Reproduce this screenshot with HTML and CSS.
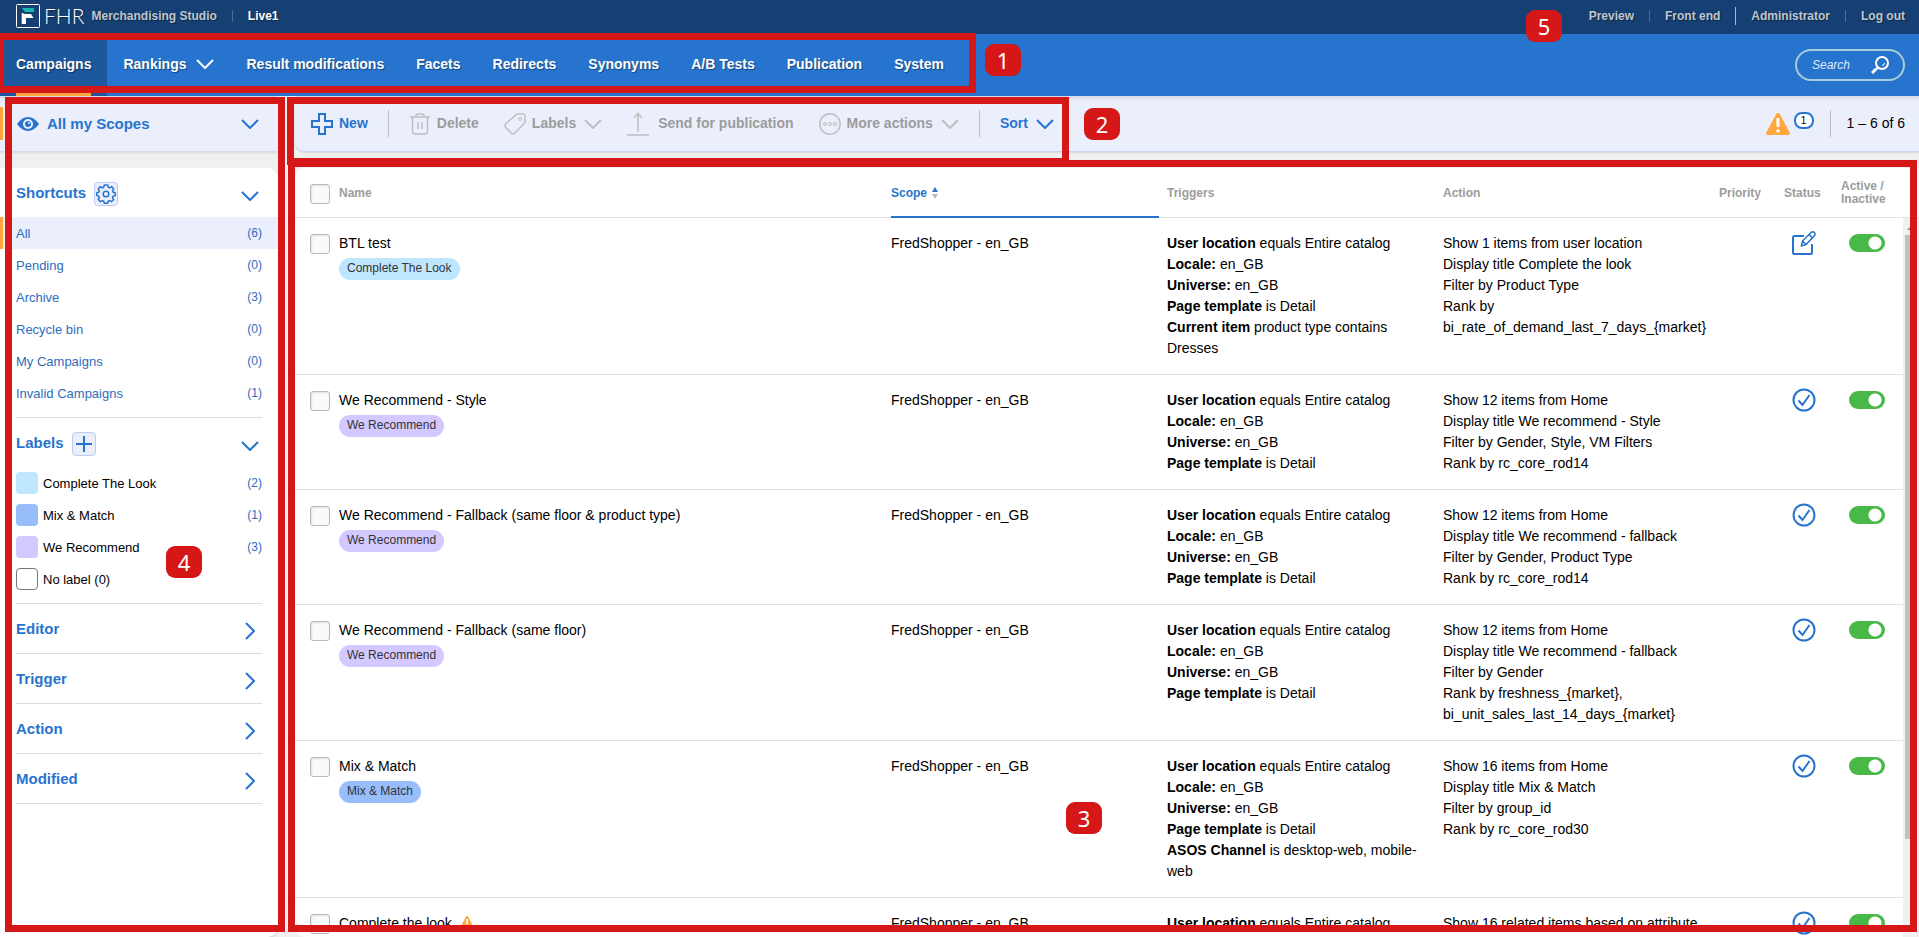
FILE: index.html
```html
<!DOCTYPE html>
<html lang="en">
<head>
<meta charset="utf-8">
<meta name="viewport" content="width=device-width, initial-scale=1">
<title>FHR Merchandising Studio – Campaigns</title>
<link rel="stylesheet" href="styles.css">
</head>
<body>
<svg class="sprite" aria-hidden="true">
  <symbol id="down" viewBox="0 0 18 10"><path d="M1 1l8 8 8-8"/></symbol>
  <symbol id="right" viewBox="0 0 10 18"><path d="M1 1l8 8-8 8"/></symbol>
  <symbol id="warn" viewBox="0 0 24 22"><path d="M12 0c.8 0 1.4.4 1.8 1.1l10 18.6c.6 1.2-.2 2.3-1.4 2.3H1.600C.4 22-.4 20.900.2 19.700l10-18.600C10.600.4 11.200 0 12 0z" fill="#ffa63d"/><path d="M12 5v9" stroke="#fff" stroke-width="3"/><circle cx="12" cy="18" r="1.800" fill="#fff"/></symbol>
  <symbol id="done" viewBox="0 0 24 24"><circle cx="12" cy="12" r="10.500"/><path d="M6.500 12.500l4 4.500 7-10"/></symbol>
  <symbol id="edit" viewBox="0 0 24 24"><path d="M12 5H2.500Q1 5 1 6.500v15Q1 23 2.500 23h16q1.500 0 1.500-1.500V13"/><path d="M9.500 15l1-5 8.700-8.700q1.800-1.100 3.200.3 1.200 1.300.2 3L14 13.500z M17 3.500l3.500 3.500M10.500 10l3.500 3.500" stroke-width="1.500"/></symbol>
</svg>

<header class="topbar">
  <svg class="logo" viewBox="0 0 24 24" aria-hidden="true"><rect x=".5" y=".5" width="23" height="23" rx="1" fill="none" stroke="#fff"/><path d="M5.700 4H18v4H9z" fill="#14b8ae"/><path d="M5.700 8.700L9 10h6l2.500 4H10v6H5.700z" fill="#fff"/></svg>
  <span class="brand">FHR</span>
  <span class="product">Merchandising Studio</span>
  <i class="bar"></i>
  <span class="live">Live1</span>
  <div class="account">
    <a href="#">Preview</a><i class="bar"></i><a href="#">Front end</a><i class="bar bar-hot"></i><a href="#">Administrator</a><i class="bar"></i><a href="#">Log out</a>
  </div>
</header>

<nav class="nav">
  <a class="current" href="#">Campaigns</a>
  <a href="#">Rankings <svg class="chev"><use href="#down"/></svg></a>
  <a href="#">Result modifications</a>
  <a href="#">Facets</a>
  <a href="#">Redirects</a>
  <a href="#">Synonyms</a>
  <a href="#">A/B Tests</a>
  <a href="#">Publication</a>
  <a href="#">System</a>
  <form class="search">
    <input type="text" placeholder="Search" aria-label="Search">
    <svg viewBox="0 0 18 18" aria-hidden="true"><circle cx="11" cy="7" r="6" fill="none" stroke="#fff" stroke-width="2"/><path d="M7 11.500l-2 2" stroke="#fff" stroke-width="2"/><path d="M5 13l-4 4" stroke="#fff" stroke-width="3"/><path d="M11 9.500q2.500-.2 2.700-2.500" fill="none" stroke="#fff"/></svg>
  </form>
</nav>

<main class="layout">
  <button class="scopes">
    <svg class="eye" viewBox="0 0 22 14" aria-hidden="true"><path d="M0 7Q5 0 11 0t11 7q-5 7-11 7T0 7z" fill="#2774cf"/><circle cx="11" cy="7" r="5" fill="#ebeffc"/><circle cx="11" cy="7" r="3" fill="#2774cf"/><circle cx="12" cy="6" r="1" fill="#ebeffc"/></svg>
    <span>All my Scopes</span>
    <svg class="chev"><use href="#down"/></svg>
  </button>

  <div class="toolbar">
    <button class="tool">
      <svg class="icon" viewBox="0 0 22 22"><path d="M8 1h6v7h7v6h-7v7H8v-7H1V8h7z" stroke-width="2"/></svg>New
    </button>
    <i class="rule"></i>
    <div class="tools">
      <button class="tool" disabled>
        <svg class="icon" viewBox="0 0 22 22"><path d="M1 4h20M3.500 4v14.500q0 2.500 2.500 2.500h10q2.500 0 2.500-2.500V4M6.500 4Q7 1 9 1h4q2 0 2.500 3M9 9v7M13 9v7" stroke-width="1.500"/></svg>Delete
      </button>
      <button class="tool" disabled>
        <svg class="icon" viewBox="0 0 22 22"><path d="M13 1h6q2 0 2 2v6.500L10.500 20.500q-1.500 1-3 0L1.500 14q-1-1.500 0-3z" stroke-width="1.500"/><circle cx="16" cy="6" r="1.500"/></svg>Labels
        <svg class="chev"><use href="#down"/></svg>
      </button>
      <button class="tool" disabled>
        <svg class="icon icon-send" viewBox="0 0 22 24"><path d="M11 20V2M7 6l4-4.500L15 6M0 23h22" stroke-width="1.500"/></svg>Send for publication
      </button>
      <button class="tool" disabled>
        <svg class="icon" viewBox="0 0 22 22"><circle cx="11" cy="11" r="10.200" stroke-width="1.500"/><circle cx="6" cy="11" r="1.500"/><circle cx="11" cy="11" r="1.500"/><circle cx="16" cy="11" r="1.500"/></svg>More actions
        <svg class="chev"><use href="#down"/></svg>
      </button>
    </div>
    <i class="rule"></i>
    <button class="tool">Sort <svg class="chev"><use href="#down"/></svg></button>
    <div class="summary">
      <svg class="warn"><use href="#warn"/></svg>
      <span class="bubble">1</span>
      <i class="rule"></i>
      <span>1 – 6 of 6</span>
    </div>
  </div>

  <aside class="side">
    <section>
      <div class="side-head">
        <h2>Shortcuts</h2>
        <button class="mini" aria-label="Shortcut settings"><svg viewBox="0 0 18 18"><path d="M7.300 0h3.400l.5 2.200 1.300.6 2-1.200 2.200 2.300-1.200 1.900.6 1.400 2.100.5v2.900l-2.200.6-.5 1.300 1.100 2-2.200 2.200-2-1.100-1.300.6-.5 2H7.300l-.6-2-1.300-.6-2 1.100-2.200-2.200 1.200-2-.6-1.300L-.2 10.600V7.700l2-.5.6-1.400-1.200-1.900 2.200-2.300 2 1.200 1.300-.6z" stroke-linejoin="round" stroke-width="1.500"/><circle cx="9" cy="9" r="2.800" stroke-width="1.500"/></svg></button>
        <svg class="chev"><use href="#down"/></svg>
      </div>
      <ul class="list">
        <li class="on"><a href="#">All</a><span>(6)</span></li>
        <li><a href="#">Pending</a><span>(0)</span></li>
        <li><a href="#">Archive</a><span>(3)</span></li>
        <li><a href="#">Recycle bin</a><span>(0)</span></li>
        <li><a href="#">My Campaigns</a><span>(0)</span></li>
        <li><a href="#">Invalid Campaigns</a><span>(1)</span></li>
      </ul>
    </section>
    <section>
      <div class="side-head">
        <h2>Labels</h2>
        <button class="mini" aria-label="Add label"><svg viewBox="0 0 18 18"><path d="M9 1v16M1 9h16" stroke-width="2"/></svg></button>
        <svg class="chev"><use href="#down"/></svg>
      </div>
      <ul class="list labels">
        <li><i class="swatch look"></i><a href="#">Complete The Look</a><span>(2)</span></li>
        <li><i class="swatch mix"></i><a href="#">Mix &amp; Match</a><span>(1)</span></li>
        <li><i class="swatch rec"></i><a href="#">We Recommend</a><span>(3)</span></li>
        <li><i class="swatch none"></i><a href="#">No label (0)</a></li>
      </ul>
    </section>
    <section><div class="side-head"><h2>Editor</h2><svg class="next"><use href="#right"/></svg></div></section>
    <section><div class="side-head"><h2>Trigger</h2><svg class="next"><use href="#right"/></svg></div></section>
    <section><div class="side-head"><h2>Action</h2><svg class="next"><use href="#right"/></svg></div></section>
    <section><div class="side-head"><h2>Modified</h2><svg class="next"><use href="#right"/></svg></div></section>
  </aside>

  <div class="panel">
    <table class="grid">
      <colgroup><col class="c-check"><col><col class="c-wide"><col class="c-wide"><col class="c-wide"><col class="c-prio"><col class="c-status"><col class="c-active"></colgroup>
      <thead>
        <tr>
          <th><input class="tick" type="checkbox" aria-label="Select all"></th>
          <th>Name</th>
          <th class="sorted"><div>Scope <svg class="sort" viewBox="0 0 6 12"><path d="M3 0l3 5H0z" fill="#2774cf"/><path d="M3 12l3-5H0z" fill="#bbb"/></svg></div></th>
          <th>Triggers</th><th>Action</th><th>Priority</th><th>Status</th><th>Active /<br>Inactive</th>
        </tr>
      </thead>
      <tbody>
        <tr>
          <td><input class="tick" type="checkbox" aria-label="Select BTL test"></td>
          <td>BTL test<br><span class="pill look">Complete The Look</span></td>
          <td>FredShopper - en_GB</td>
          <td><b>User location</b> equals Entire catalog<br><b>Locale:</b> en_GB<br><b>Universe:</b> en_GB<br><b>Page template</b> is Detail<br><b>Current item</b> product type contains Dresses</td>
          <td>Show 1 items from user location<br>Display title Complete the look<br>Filter by Product Type<br>Rank by bi_rate_of_demand_last_7_days_{market}</td>
          <td></td>
          <td class="status"><svg><use href="#edit"/></svg></td>
          <td class="active"><input class="toggle" type="checkbox" role="switch" checked aria-label="BTL test active"></td>
        </tr>
        <tr>
          <td><input class="tick" type="checkbox" aria-label="Select We Recommend - Style"></td>
          <td>We Recommend - Style<br><span class="pill rec">We Recommend</span></td>
          <td>FredShopper - en_GB</td>
          <td><b>User location</b> equals Entire catalog<br><b>Locale:</b> en_GB<br><b>Universe:</b> en_GB<br><b>Page template</b> is Detail</td>
          <td>Show 12 items from Home<br>Display title We recommend - Style<br>Filter by Gender, Style, VM Filters<br>Rank by rc_core_rod14</td>
          <td></td>
          <td class="status"><svg><use href="#done"/></svg></td>
          <td class="active"><input class="toggle" type="checkbox" role="switch" checked aria-label="We Recommend - Style active"></td>
        </tr>
        <tr>
          <td><input class="tick" type="checkbox" aria-label="Select We Recommend - Fallback (same floor &amp; product type)"></td>
          <td>We Recommend - Fallback (same floor &amp; product type)<br><span class="pill rec">We Recommend</span></td>
          <td>FredShopper - en_GB</td>
          <td><b>User location</b> equals Entire catalog<br><b>Locale:</b> en_GB<br><b>Universe:</b> en_GB<br><b>Page template</b> is Detail</td>
          <td>Show 12 items from Home<br>Display title We recommend - fallback<br>Filter by Gender, Product Type<br>Rank by rc_core_rod14</td>
          <td></td>
          <td class="status"><svg><use href="#done"/></svg></td>
          <td class="active"><input class="toggle" type="checkbox" role="switch" checked aria-label="Fallback by floor and product type active"></td>
        </tr>
        <tr>
          <td><input class="tick" type="checkbox" aria-label="Select We Recommend - Fallback (same floor)"></td>
          <td>We Recommend - Fallback (same floor)<br><span class="pill rec">We Recommend</span></td>
          <td>FredShopper - en_GB</td>
          <td><b>User location</b> equals Entire catalog<br><b>Locale:</b> en_GB<br><b>Universe:</b> en_GB<br><b>Page template</b> is Detail</td>
          <td>Show 12 items from Home<br>Display title We recommend - fallback<br>Filter by Gender<br>Rank by freshness_{market}, bi_unit_sales_last_14_days_{market}</td>
          <td></td>
          <td class="status"><svg><use href="#done"/></svg></td>
          <td class="active"><input class="toggle" type="checkbox" role="switch" checked aria-label="Fallback by floor active"></td>
        </tr>
        <tr>
          <td><input class="tick" type="checkbox" aria-label="Select Mix &amp; Match"></td>
          <td>Mix &amp; Match<br><span class="pill mix">Mix &amp; Match</span></td>
          <td>FredShopper - en_GB</td>
          <td><b>User location</b> equals Entire catalog<br><b>Locale:</b> en_GB<br><b>Universe:</b> en_GB<br><b>Page template</b> is Detail<br><b>ASOS Channel</b> is desktop-web, mobile-web</td>
          <td>Show 16 items from Home<br>Display title Mix &amp; Match<br>Filter by group_id<br>Rank by rc_core_rod30</td>
          <td></td>
          <td class="status"><svg><use href="#done"/></svg></td>
          <td class="active"><input class="toggle" type="checkbox" role="switch" checked aria-label="Mix &amp; Match active"></td>
        </tr>
        <tr>
          <td><input class="tick" type="checkbox" aria-label="Select Complete the look"></td>
          <td>Complete the look <svg class="warn-small"><use href="#warn"/></svg></td>
          <td>FredShopper - en_GB</td>
          <td><b>User location</b> equals Entire catalog</td>
          <td>Show 16 related items based on attribute</td>
          <td></td>
          <td class="status"><svg><use href="#done"/></svg></td>
          <td class="active"><input class="toggle" type="checkbox" role="switch" checked aria-label="Complete the look active"></td>
        </tr>
      </tbody>
    </table>
    <div class="gutter">
      <div class="gutter-head"></div>
      <div class="track"><i class="arrow"></i><i class="thumb"></i></div>
    </div>
  </div>
</main>

<div class="frame frame-nav"></div>
<div class="frame frame-tools"></div>
<div class="frame frame-table"></div>
<div class="frame frame-side"></div>
<span class="mark mark-1">1</span>
<span class="mark mark-2">2</span>
<span class="mark mark-3">3</span>
<span class="mark mark-4">4</span>
<span class="mark mark-5">5</span>
</body>
</html>
```

FILE: styles.css
```css
* { box-sizing: border-box; }

body {
  position: relative;
  display: flex;
  flex-direction: column;
  height: 100vh;
  margin: 0;
  overflow: hidden;
  background: #f0f0f0;
  color: #000;
  font: 14px/21px "Liberation Sans", Arial, sans-serif;
}

a { color: inherit; text-decoration: none; }
button { padding: 0; border: 0; background: none; font: inherit; color: inherit; }
svg { flex: none; fill: none; stroke: none; }
.sprite { position: absolute; width: 0; height: 0; }

.chev { width: 18px; height: 10px; stroke: currentColor; stroke-width: 2; }
.next { width: 10px; height: 18px; margin: 5px 7px 0 auto; stroke: #2774cf; stroke-width: 2; }

/* Top bar */
.topbar {
  display: flex;
  align-items: center;
  height: 34px;
  padding: 0 14px 2px 16px;
  background: #164073;
  color: #bfc6cf;
  font-size: 12px;
  font-weight: bold;
}
.topbar, .nav { flex: none; text-shadow: 1px 1px 1px rgba(0, 0, 0, .4); }
.logo { width: 24px; height: 24px; }
.brand { margin: 0 7px 0 4px; color: #fff; font: 300 21px/24px Lato, sans-serif; }
.bar { width: 1px; height: 12px; margin: 0 15px; background: #4d6c8c; }
.bar-hot { height: 18px; background: #ffa63d; }
.live { color: #fff; }
.account { display: flex; align-items: center; margin-left: auto; }

/* Main navigation */
.nav {
  display: flex;
  align-items: stretch;
  height: 62px;
  padding-right: 14px;
  background: #2774cf;
  color: #fff;
  font-weight: bold;
}
.nav a { display: flex; align-items: center; gap: 10px; padding: 0 16px 2px; }
.nav .current { background: linear-gradient(#ffa63d, #ffa63d) center bottom / calc(100% - 32px) 3px no-repeat #1d589f; }
.search {
  display: flex;
  align-items: center;
  align-self: center;
  width: 110px;
  height: 32px;
  margin-left: auto;
  padding: 0 14px 0 15px;
  border: 2px solid #a8cdda;
  border-radius: 16px;
}
.search input {
  flex: 1;
  min-width: 0;
  padding: 0;
  border: 0;
  outline: 0;
  background: none;
  color: #fff;
  font: italic 12px/20px "Liberation Sans", Arial, sans-serif;
}
.search input::placeholder { color: #dfeaf8; }
.search svg { width: 18px; height: 18px; }

/* Page grid */
.layout {
  flex: 1;
  min-height: 0;
  display: grid;
  grid-template-columns: 278px minmax(0, 1fr);
  grid-template-rows: 56px minmax(0, 1fr);
  gap: 16px 17px;
}
.scopes, .toolbar {
  display: flex;
  align-items: center;
  border-bottom: 1px solid #c6d5ec;
  background: linear-gradient(#d5dae8, #ebeffc 5px);
  box-shadow: 0 1px 2px rgba(0, 0, 0, .1);
  font-weight: bold;
}
.scopes {
  gap: 8px;
  padding: 0 19px 0 14px;
  border-left: 3px solid #ffa63d;
  border-image: linear-gradient(transparent 12px, #ffa63d 12px, #ffa63d 44px, transparent 44px) 1;
  color: #2774cf;
  font-size: 15px;
}
.scopes .chev { margin-left: auto; }
.eye { width: 22px; height: 14px; }
.toolbar { gap: 20px; padding: 0 14px 0 16px; border-radius: 0 0 0 10px; }
.tools { display: flex; gap: 25px; }
.tool { display: flex; align-items: center; gap: 6px; color: #2774cf; white-space: nowrap; }
.tool:disabled { color: #9c9c9c; }
.tool svg { stroke: currentColor; }
.tool:disabled svg { stroke: #bfbfbf; }
.tool .chev { margin-left: 2px; }
.icon { width: 22px; height: 22px; }
.icon-send { height: 24px; margin-right: 3px; }
.rule { width: 1px; height: 27px; background: #bcbfc9; }
.summary { display: flex; align-items: center; gap: 16px; margin-left: auto; font-weight: normal; }
.warn { width: 24px; height: 22px; }
.bubble {
  width: 20px;
  height: 17px;
  margin: 0 0 6px -12px;
  border: 2px solid #2774cf;
  border-radius: 8px;
  background: #fff;
  font-size: 10px;
  line-height: 13px;
  text-align: center;
}

/* Sidebar */
.side { border-radius: 0 10px 10px 0; background: #fff; box-shadow: 0 1px 2px rgba(0, 0, 0, .15); }
.side section::after { content: ""; display: block; height: 1px; margin: 0 16px; background: #dadada; }
.side-head { display: flex; align-items: center; height: 49px; padding: 0 16px; }
.side-head h2 { margin: 0; color: #2774cf; font-size: 15px; line-height: 21px; }
.side-head .chev { margin: 7px 3px 0 auto; color: #2774cf; }
.mini {
  display: grid;
  place-items: center;
  width: 24px;
  height: 24px;
  margin: 3px 0 0 8px;
  border: 1px solid #bccbf1;
  border-radius: 4px;
  background: #ebeffc;
}
.mini svg { width: 18px; height: 18px; stroke: #2774cf; overflow: visible; }
.list { margin: 0; padding: 0 0 8px; list-style: none; color: #2e6cbb; font-size: 13px; }
.list li { display: flex; align-items: center; height: 32px; padding: 0 16px 0 13px; border-left: 3px solid transparent; }
.list .on { border-color: #ffa63d; background: #ebeffc; }
.list span { margin-left: auto; font-size: 12px; }
.labels a { color: #000; }
.swatch { width: 22px; height: 22px; margin-right: 5px; border-radius: 4px; }
.look { background: #bfe6ff; }
.mix { background: #97bdfb; }
.rec { background: #d3c8ff; }
.none { border: 1px solid #777; background: #fff; }

/* Campaign table */
.panel { display: flex; overflow: hidden; border-radius: 10px 0 0 10px; background: #fff; }
.grid { flex: 1; align-self: flex-start; min-width: 0; border-collapse: separate; border-spacing: 0; table-layout: fixed; }
.c-check { width: 44px; }
.c-wide { width: 276px; }
.c-prio { width: 65px; }
.c-status { width: 57px; }
.c-active { width: 62px; }
.grid th { height: 50px; padding: 1px 0 0; border-bottom: 1px solid #e2e3e8; color: #9c9c9c; font-size: 12px; line-height: 13px; text-align: left; }
.grid td { padding: 15px 8px 15px 0; border-bottom: 1px solid #e0e2e8; vertical-align: top; }
.grid th.sorted {
  border-bottom-color: transparent;
  background:
    linear-gradient(#2774cf, #2774cf) left bottom / calc(100% - 8px) 2px no-repeat border-box,
    linear-gradient(#e2e3e8, #e2e3e8) left bottom / 100% 1px no-repeat border-box;
  color: #2774cf;
}
.sorted div { display: flex; align-items: center; gap: 5px; }
.sort { width: 6px; height: 12px; }
.tick {
  appearance: none;
  display: block;
  width: 20px;
  height: 20px;
  margin: 1px 0 0 15px;
  border: 1px solid #b9b9b9;
  border-radius: 3px;
  background: #fafafa;
  box-shadow: inset 1px 1px 2px rgba(0, 0, 0, .1);
}
.pill {
  display: inline-block;
  height: 22px;
  margin-top: 4px;
  padding: 0 8px;
  border-radius: 11px;
  color: #333;
  font-size: 12px;
  line-height: 20px;
  vertical-align: top;
}
.warn-small { width: 14px; height: 13px; margin-left: 4px; vertical-align: -1px; }
.grid td.status { padding: 13px 0 0 8px; }
.status svg { display: block; width: 24px; height: 24px; stroke: #2774cf; stroke-width: 2; }
.grid td.active { padding: 16px 0 0 8px; }
.toggle {
  appearance: none;
  display: block;
  width: 36px;
  height: 18px;
  margin: 0;
  border-radius: 9px;
  background: radial-gradient(circle at 26px 9px, #fff 6px, transparent 7px), #48b847;
}
.gutter { display: flex; flex-direction: column; width: 16px; }
.gutter-head { flex: none; height: 50px; border-bottom: 1px solid #e2e3e8; }
.track { flex: 1; display: flex; flex-direction: column; align-items: center; gap: 5px; padding-top: 8px; background: #f1f1f1; }
.arrow { border: 4px solid transparent; border-top: 0; border-bottom-color: #8a8a8a; }
.thumb { width: 12px; height: 85%; background: #c1c1c1; }

/* Numbered callouts laid over the screen */
.frame { position: absolute; border: 7px solid #d51717; pointer-events: none; }
.frame-nav { left: -3px; top: 33px; width: 979px; height: 60px; }
.frame-tools { left: 287px; top: 97px; width: 782px; height: 68px; }
.frame-table { left: 288px; right: 2px; top: 160px; bottom: 5px; }
.frame-side { left: 5px; top: 97px; width: 280px; bottom: 5px; }
.mark {
  position: absolute;
  width: 36px;
  height: 32px;
  border-radius: 9px;
  background: #d51717;
  color: #fff;
  font: 22px/32px "Noto Sans", sans-serif;
  text-align: center;
}
.mark-1 { left: 985px; top: 44px; }
.mark-2 { left: 1084px; top: 108px; }
.mark-3 { left: 1066px; top: 802px; }
.mark-4 { left: 166px; top: 546px; }
.mark-5 { left: 1526px; top: 10px; }
```
